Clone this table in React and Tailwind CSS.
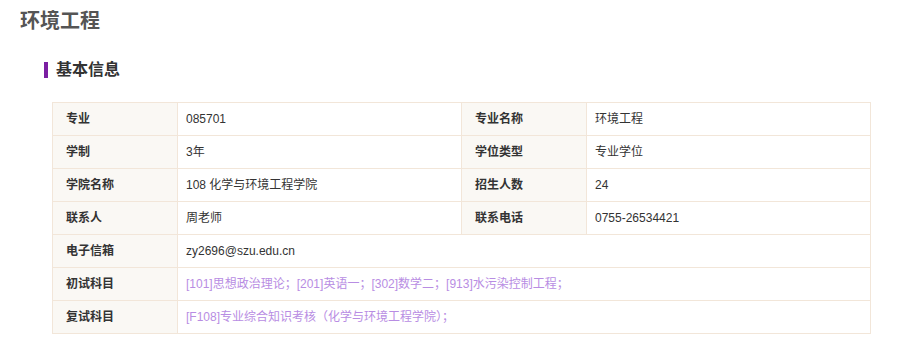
import { Fragment } from "react";

const info = [
  [
    ["专业", "085701"],
    ["专业名称", "环境工程"],
  ],
  [
    ["学制", "3年"],
    ["学位类型", "专业学位"],
  ],
  [
    ["学院名称", "108 化学与环境工程学院"],
    ["招生人数", "24"],
  ],
  [
    ["联系人", "周老师"],
    ["联系电话", "0755-26534421"],
  ],
];

const wide = [
  { label: "电子信箱", value: "zy2696@szu.edu.cn" },
  { label: "初试科目", value: "[101]思想政治理论；[201]英语一；[302]数学二；[913]水污染控制工程；", link: true },
  { label: "复试科目", value: "[F108]专业综合知识考核（化学与环境工程学院）；", link: true },
];

const th = "border border-[#f2e6d9] bg-[#faf8f4] pl-[13px] text-left font-bold text-[#333]";
const td = "border border-[#f2e6d9] bg-white pl-[8px]";

export default function App() {
  return (
    <div
      className="min-h-[355px] w-[899px] bg-white px-5 pt-[7px]"
      style={{ fontFamily: '"Liberation Sans", "Noto Sans CJK SC", sans-serif' }}
    >
      <h1 className="text-[20px] font-bold leading-[28px] text-[#555]">环境工程</h1>

      <div className="ml-6 mt-[23px] flex items-center gap-2">
        <span className="h-4 w-1 bg-[#7b1fa2]" />
        <h2 className="text-[16px] font-bold leading-6 text-[#333]">基本信息</h2>
      </div>

      <table className="ml-8 mt-5 w-[818px] table-fixed border-collapse text-[12px]">
        <colgroup>
          <col className="w-[125px]" />
          <col className="w-[284px]" />
          <col className="w-[125px]" />
          <col className="w-[284px]" />
        </colgroup>
        <tbody>
          {info.map((row, i) => (
            <tr key={i} className="h-[33px]">
              {row.map(([label, value]) => (
                <Fragment key={label}>
                  <th className={th}>{label}</th>
                  <td className={td + " text-[#333]"}>{value}</td>
                </Fragment>
              ))}
            </tr>
          ))}
          {wide.map((row) => (
            <tr key={row.label} className="h-[33px]">
              <th className={th}>{row.label}</th>
              <td colSpan={3} className={td + (row.link ? " text-[#b88de3]" : " text-[#333]")}>
                {row.value}
              </td>
            </tr>
          ))}
        </tbody>
      </table>
    </div>
  );
}
